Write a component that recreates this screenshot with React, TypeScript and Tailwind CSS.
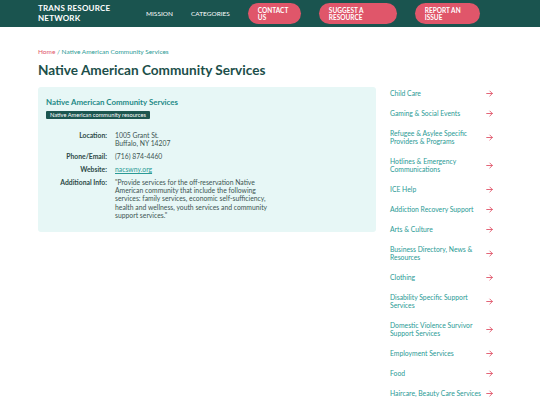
import React from 'react';

const categories = [
  'Child Care',
  'Gaming & Social Events',
  'Refugee & Asylee Specific Providers & Programs',
  'Hotlines & Emergency Communications',
  'ICE Help',
  'Addiction Recovery Support',
  'Arts & Culture',
  'Business Directory, News & Resources',
  'Clothing',
  'Disability Specific Support Services',
  'Domestic Violence Survivor Support Services',
  'Employment Services',
  'Food',
  'Haircare, Beauty Care Services',
];

function Arrow() {
  return (
    <svg width="7" height="7" viewBox="0 0 10 10" fill="none" stroke="#e0566a" strokeWidth="1.3" strokeLinecap="round" strokeLinejoin="round">
      <path d="M1 5h8M5.5 1.5 9 5l-3.5 3.5" />
    </svg>
  );
}

function Header() {
  return (
    <header className="bg-[#1a544f] h-[27px]">
      <div className="ml-[38px] h-full flex items-center">
        <div className="text-white font-bold text-[8px] leading-[9.5px] tracking-[0.2px] uppercase w-[108px]">
          Trans Resource<br />Network
        </div>
        <nav className="flex items-center text-white text-[6.5px] uppercase">
          <span className="mr-[18px]">Mission</span>
          <span className="mr-[18px]">Categories</span>
          <a className="bg-[#e0566a] rounded-full w-[53px] h-[21px] pl-[10px] flex items-center leading-[7px] font-bold mr-[18px]">
            Contact<br />Us
          </a>
          <a className="bg-[#e0566a] rounded-full w-[78px] h-[21px] pl-[10px] flex items-center leading-[7px] font-bold mr-[18px]">
            Suggest a<br />Resource
          </a>
          <a className="bg-[#e0566a] rounded-full w-[65px] h-[21px] pl-[10px] flex items-center leading-[7px] font-bold">
            Report an<br />Issue
          </a>
        </nav>
      </div>
    </header>
  );
}

export default function App() {
  return (
    <div className="bg-white min-h-[405px] font-['Lato','Open_Sans',sans-serif]">
      <Header />
      <main className="ml-[38px] w-[458px] pt-[21px]">
        <div className="text-[6.5px] leading-[8px] text-[#2a9a95]">
          <span className="text-[#e0566a]">Home</span> / Native American Community Services
        </div>
        <h1 className="text-[13.6px] leading-[16px] font-bold text-[#1c4f4a] mt-[6px] mb-[9px]">
          Native American Community Services
        </h1>
        <div className="flex items-start">
          <section className="w-[338px] bg-[#e7f7f6] rounded-[3px] px-[8px] pt-[10px] pb-[13px]">
            <h2 className="text-[7.9px] leading-[10px] font-bold text-[#1e8a86]">Native American Community Services</h2>
            <span className="block w-fit mt-[4px] bg-[#1c5650] text-white text-[5.7px] leading-[8px] px-[4px] rounded-[1px]">
              Native American community resources
            </span>
            <dl className="grid grid-cols-[61px_155px] gap-x-[8px] gap-y-[4.5px] mt-[12px] text-[6.8px] leading-[8.3px] text-[#3d5552]">
              <dt className="text-right font-bold text-[#2d4a47]">Location:</dt>
              <dd>1005 Grant St.<br />Buffalo, NY 14207</dd>
              <dt className="text-right font-bold text-[#2d4a47]">Phone/Email:</dt>
              <dd>(716) 874-4460</dd>
              <dt className="text-right font-bold text-[#2d4a47]">Website:</dt>
              <dd><a className="underline text-[#2a9a95]">nacswny.org</a></dd>
              <dt className="text-right font-bold text-[#2d4a47]">Additional Info:</dt>
              <dd>
                "Provide services for the off-reservation Native American community that include the following services: family services, economic self-sufficiency, health and wellness, youth services and community support services."
              </dd>
            </dl>
          </section>
          <aside className="ml-[14px] w-[103px] -mt-[4px]">
            <ul>
              {categories.map((c) => (
                <li key={c} className="flex items-center justify-between py-[6px]">
                  <span className="text-[6.8px] leading-[8px] text-[#2a9a95] w-[93px]">{c}</span>
                  <Arrow />
                </li>
              ))}
            </ul>
          </aside>
        </div>
      </main>
    </div>
  );
}
